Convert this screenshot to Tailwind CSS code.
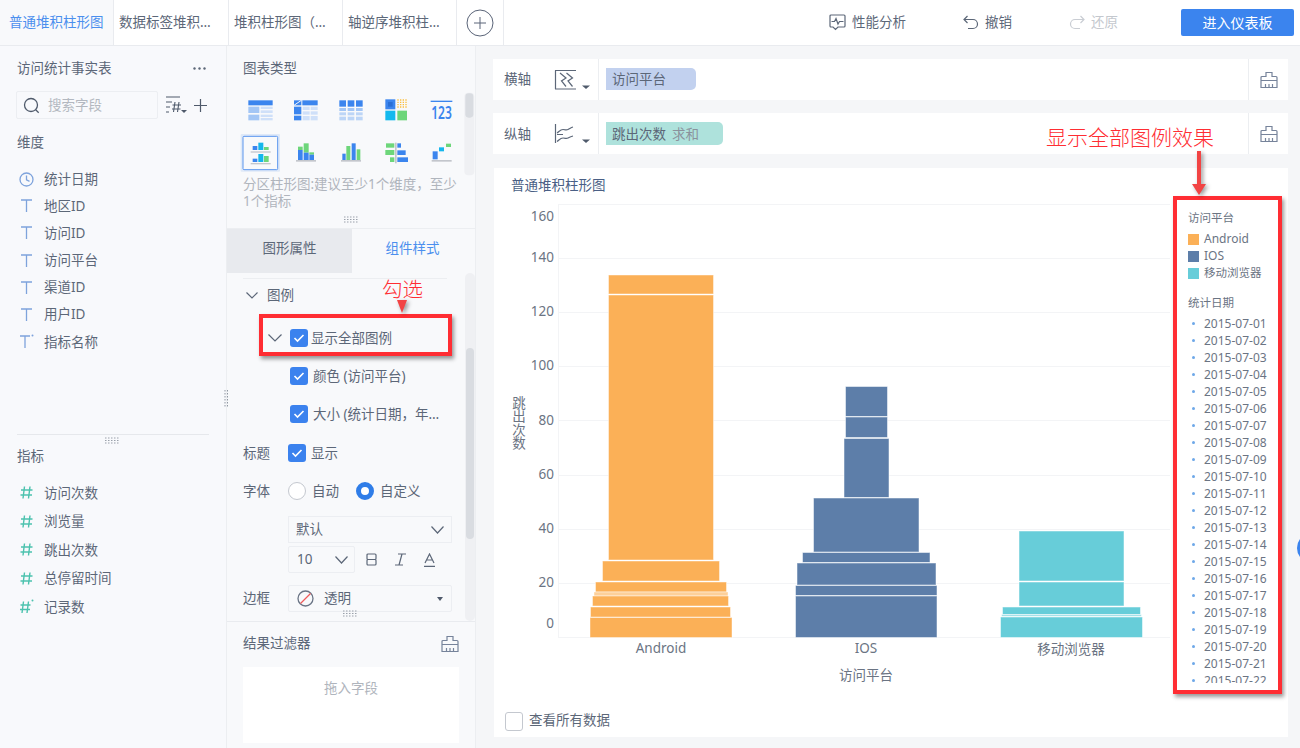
<!DOCTYPE html>
<html lang="zh-CN">
<head>
    <meta charset="UTF-8">
    <title>普通堆积柱形图</title>
    <script src="https://cdn.jsdelivr.net/npm/@tailwindcss/browser@4"></script>
</head>
<body class="bg-white font-['Noto_Sans','Noto_Sans_CJK_SC',sans-serif] text-[13.5px] text-[#5c6778]">
<div class="relative w-[1300px] h-[748px] overflow-hidden flex flex-col">

    <!-- top bar -->
    <div class="h-[46px] shrink-0 flex border-b border-[#e9ebef] bg-white">
        <div class="w-[114px] border-r border-[#e9ebef] bg-[#f8f9fb] pl-[9px] leading-[45px] text-[#4b8fee]">普通堆积柱形图</div>
        <div class="w-[115px] border-r border-[#e9ebef] pl-[5px] leading-[45px] whitespace-nowrap">数据标签堆积…</div>
        <div class="w-[114px] border-r border-[#e9ebef] pl-[5px] leading-[45px] whitespace-nowrap">堆积柱形图（…</div>
        <div class="w-[114px] border-r border-[#e9ebef] pl-[5px] leading-[45px] whitespace-nowrap">轴逆序堆积柱…</div>
        <div class="w-[47px] border-r border-[#e9ebef] flex items-center justify-center">
            <svg width="28" height="28" viewBox="0 0 28 28" fill="none" stroke="#5a6478"><circle cx="14" cy="14" r="13"/><path d="M14 8v12M8 14h12"/></svg>
        </div>
        <div class="ml-[325px] flex items-center gap-[6px]">
            <svg width="17" height="17" viewBox="0 0 17 17" fill="none" stroke="#5c6778" stroke-width="1.2"><path d="M4 13H2a1 1 0 0 1-1-1V2a1 1 0 0 1 1-1h13a1 1 0 0 1 1 1v10a1 1 0 0 1-1 1H9l-2.500 2.500L4 13z"/><path d="M2.500 7.500h3l1.500-3 2 5.500 1.500-2.500h4"/></svg>
            <span>性能分析</span>
        </div>
        <div class="ml-[57px] flex items-center gap-[6px]">
            <svg width="16" height="16" viewBox="0 0 16 16" fill="none" stroke="#5c6778" stroke-width="1.2"><path d="M4.500 1L1 4.500 4.500 8M1 4.500h9a4.500 4.500 0 0 1 0 9H5"/></svg>
            <span>撤销</span>
        </div>
        <div class="ml-[57px] flex items-center gap-[6px] text-[#c4c8ce]">
            <svg width="16" height="16" viewBox="0 0 16 16" fill="none" stroke="#c9cdd3" stroke-width="1.2"><path d="M11.500 1L15 4.500 11.500 8M15 4.500H6a4.500 4.500 0 0 0 0 9h5"/></svg>
            <span>还原</span>
        </div>
        <div class="ml-[63px] mt-[9px] w-[113px] h-[27px] rounded-[2px] bg-[#3b84ee] text-white text-[14px] leading-[27px] text-center">进入仪表板</div>
    </div>

    <div class="flex-1 flex min-h-0">

        <!-- field panel -->
        <div class="w-[226px] shrink-0 bg-[#f8f9fc] flex flex-col">
            <div class="h-[45px] shrink-0 flex items-center justify-between pl-[17px] pr-[20px]">
                <span>访问统计事实表</span>
                <svg width="13" height="3" viewBox="0 0 13 3" fill="#5c6778"><circle cx="1.500" cy="1.500" r="1.200"/><circle cx="6.500" cy="1.500" r="1.200"/><circle cx="11.500" cy="1.500" r="1.200"/></svg>
            </div>
            <div class="h-[28px] shrink-0 flex items-center pl-[16px]">
                <div class="w-[142px] h-[28px] border border-[#eceef2] rounded-[2px] flex items-center pl-[6px] gap-[8px] text-[#b3b8c0]">
                    <svg width="17" height="17" viewBox="0 0 17 17" fill="none" stroke="#4f5a6b" stroke-width="1.300"><circle cx="8" cy="8" r="6.500"/><path d="M12.700 12.700l3 3"/></svg>
                    <span>搜索字段</span>
                </div>
                <svg class="ml-[7px]" width="23" height="20" viewBox="0 0 23 20" fill="none" stroke="#4f5a6b" stroke-width="1.100"><path d="M1 2h14M1 7h6M1 12h4M1 17h3"/><path d="M10 7l-1.500 10M14 7l-1.500 10M7.500 10h8.500M7 14h8.500"/><path d="M16 15h6l-3 3z" fill="#4f5a6b" stroke="none"/></svg>
                <svg class="ml-[5px]" width="15" height="15" viewBox="0 0 15 15" fill="none" stroke="#4f5a6b" stroke-width="1.200"><path d="M7.500 1v13M1 7.500h13"/></svg>
            </div>
            <div class="h-[46px] shrink-0 pl-[17px] leading-[46px]">维度</div>
            <div class="h-[269px] shrink-0">
                <div class="h-[27.2px] flex items-center gap-[10px] pl-[19px] pt-[2px]">
                    <svg width="15" height="15" viewBox="0 0 15 15" fill="none" stroke="#7ea3dc" stroke-width="1.300"><circle cx="7.500" cy="7.500" r="6.500"/><path d="M7.500 3.500v4.300l3 1.500"/></svg>
                    <span>统计日期</span>
                </div>
                <div class="h-[27.2px] flex items-center gap-[10px] pl-[19px]">
                    <svg width="15" height="15" viewBox="0 0 15 15" fill="none" stroke="#7ea3dc" stroke-width="1.300"><path d="M2 2h11M7.500 2v12"/></svg>
                    <span>地区ID</span>
                </div>
                <div class="h-[27.2px] flex items-center gap-[10px] pl-[19px]">
                    <svg width="15" height="15" viewBox="0 0 15 15" fill="none" stroke="#7ea3dc" stroke-width="1.300"><path d="M2 2h11M7.500 2v12"/></svg>
                    <span>访问ID</span>
                </div>
                <div class="h-[27.2px] flex items-center gap-[10px] pl-[19px]">
                    <svg width="15" height="15" viewBox="0 0 15 15" fill="none" stroke="#7ea3dc" stroke-width="1.300"><path d="M2 2h11M7.500 2v12"/></svg>
                    <span>访问平台</span>
                </div>
                <div class="h-[27.2px] flex items-center gap-[10px] pl-[19px]">
                    <svg width="15" height="15" viewBox="0 0 15 15" fill="none" stroke="#7ea3dc" stroke-width="1.300"><path d="M2 2h11M7.500 2v12"/></svg>
                    <span>渠道ID</span>
                </div>
                <div class="h-[27.2px] flex items-center gap-[10px] pl-[19px]">
                    <svg width="15" height="15" viewBox="0 0 15 15" fill="none" stroke="#7ea3dc" stroke-width="1.300"><path d="M2 2h11M7.500 2v12"/></svg>
                    <span>用户ID</span>
                </div>
                <div class="h-[27.2px] flex items-center gap-[10px] pl-[19px]">
                    <svg width="15" height="15" viewBox="0 0 15 15" fill="none" stroke="#7ea3dc" stroke-width="1.300"><path d="M1 2h10M6 2v12"/><circle cx="13.500" cy="1.500" r="1" fill="#7ea3dc" stroke="none"/></svg>
                    <span>指标名称</span>
                </div>
            </div>
            <div class="relative mx-[17px] border-t border-[#e6e8ec] h-[44.7px] leading-[42px]">
                <span>指标</span>
                <svg class="absolute left-[88px] top-[2px]" width="15" height="7" viewBox="0 0 15 7" fill="none" stroke="#9aa0aa" stroke-dasharray="1.500 1.500"><path d="M0 1h15M0 3.500h15M0 6h15"/></svg>
            </div>
            <div class="h-[28.500px] flex items-center gap-[10px] pl-[19px]">
                <svg width="15" height="15" viewBox="0 0 15 15" fill="none" stroke="#4cc2ae" stroke-width="1.400"><path d="M5.500 1.500L4 13.500M11 1.500L9.500 13.500M2 5h11.500M1.500 10h11.500"/></svg>
                <span>访问次数</span>
            </div>
            <div class="h-[28.500px] flex items-center gap-[10px] pl-[19px]">
                <svg width="15" height="15" viewBox="0 0 15 15" fill="none" stroke="#4cc2ae" stroke-width="1.400"><path d="M5.500 1.500L4 13.500M11 1.500L9.500 13.500M2 5h11.500M1.500 10h11.500"/></svg>
                <span>浏览量</span>
            </div>
            <div class="h-[28.500px] flex items-center gap-[10px] pl-[19px]">
                <svg width="15" height="15" viewBox="0 0 15 15" fill="none" stroke="#4cc2ae" stroke-width="1.400"><path d="M5.500 1.500L4 13.500M11 1.500L9.500 13.500M2 5h11.500M1.500 10h11.500"/></svg>
                <span>跳出次数</span>
            </div>
            <div class="h-[28.500px] flex items-center gap-[10px] pl-[19px]">
                <svg width="15" height="15" viewBox="0 0 15 15" fill="none" stroke="#4cc2ae" stroke-width="1.400"><path d="M5.500 1.500L4 13.500M11 1.500L9.500 13.500M2 5h11.500M1.500 10h11.500"/></svg>
                <span>总停留时间</span>
            </div>
            <div class="h-[28.500px] flex items-center gap-[10px] pl-[19px]">
                <svg width="15" height="15" viewBox="0 0 15 15" fill="none" stroke="#4cc2ae" stroke-width="1.400"><path d="M4.500 2.500L3 14M9.500 2.500L8 14M1.500 6h10M1 10.500h10"/><circle cx="13.500" cy="1.500" r="1" fill="#4cc2ae" stroke="none"/></svg>
                <span>记录数</span>
            </div>
        </div>

        <!-- chart config panel -->
        <div class="relative w-[250px] shrink-0 bg-[#f8f9fb] border-x border-[#eceef1] flex flex-col">
            <svg class="absolute left-[-3px] top-[344px]" width="5" height="17" viewBox="0 0 5 17" fill="none" stroke="#8f96a1" stroke-dasharray="1.500 1.500"><path d="M1 0v17M3.500 0v17"/></svg>
            <div class="h-[40px] shrink-0 pt-[5px] pl-[16px] leading-[34px]">图表类型</div>
            <svg class="ml-[3px] shrink-0" width="250" height="90" viewBox="0 0 750 270">
                <!-- row 1 -->
                <rect x="55" y="43" width="73" height="15" fill="#3b85ee"/>
                <rect x="55" y="62" width="33" height="19" fill="#a3c6f5"/><rect x="55" y="86" width="33" height="17" fill="#a3c6f5"/>
                <rect x="92" y="62" width="36" height="7" fill="#cfe0f9"/><rect x="92" y="73" width="36" height="8" fill="#cfe0f9"/><rect x="92" y="86" width="36" height="7" fill="#cfe0f9"/><rect x="92" y="96" width="36" height="7" fill="#cfe0f9"/>

                <rect x="217" y="43" width="46" height="15" fill="#3b85ee"/>
                <path d="M192 43h22v15h-22z" fill="#3b85ee"/><path d="M192 58l22-15" stroke="#f8f9fb" stroke-width="3"/>
                <rect x="192" y="62" width="22" height="23" fill="#3b85ee"/><rect x="192" y="89" width="22" height="14" fill="#3b85ee"/>
                <rect x="218" y="62" width="21" height="10" fill="#cfe0f9"/><rect x="242" y="62" width="21" height="10" fill="#cfe0f9"/>
                <rect x="218" y="76" width="21" height="10" fill="#cfe0f9"/><rect x="242" y="76" width="21" height="10" fill="#cfe0f9"/>
                <rect x="218" y="90" width="21" height="13" fill="#cfe0f9"/><rect x="242" y="90" width="21" height="13" fill="#cfe0f9"/>

                <rect x="328" y="43" width="20" height="19" fill="#3b85ee"/><rect x="353" y="43" width="20" height="19" fill="#3b85ee"/><rect x="378" y="43" width="20" height="19" fill="#3b85ee"/>
                <rect x="328" y="66" width="20" height="9" fill="#a3c6f5"/><rect x="353" y="66" width="20" height="9" fill="#a3c6f5"/><rect x="378" y="66" width="20" height="9" fill="#a3c6f5"/>
                <rect x="328" y="79" width="20" height="9" fill="#bcd5f7"/><rect x="353" y="79" width="20" height="9" fill="#bcd5f7"/><rect x="378" y="79" width="20" height="9" fill="#bcd5f7"/>
                <rect x="328" y="92" width="20" height="11" fill="#bcd5f7"/><rect x="353" y="92" width="20" height="11" fill="#bcd5f7"/><rect x="378" y="92" width="20" height="11" fill="#bcd5f7"/>

                <rect x="466" y="40" width="30" height="30" fill="#3b85ee"/><rect x="474" y="48" width="14" height="14" fill="#2a6fd6"/>
                <path d="M502 42h29M502 49h29M502 56h29M502 63h29" stroke="#fbbf3c" stroke-width="4" stroke-dasharray="4 4"/>
                <rect x="466" y="74" width="30" height="29" fill="#13b9ee"/><rect x="502" y="74" width="29" height="29" fill="#6dd67a"/>

                <rect x="602" y="44" width="65" height="4" fill="#3b85ee"/>
                <text x="634.500" y="100" text-anchor="middle" font-size="56" font-weight="600" textLength="62" lengthAdjust="spacingAndGlyphs" fill="#3b85ee">123</text>

                <!-- row 2 -->
                <rect x="32" y="144" width="118" height="113" rx="3" fill="#dfe9f8"/>
                <rect x="39" y="151" width="104" height="100" rx="3" fill="#f8f9fb" stroke="#5b96ee" stroke-width="3"/>
                <rect x="68" y="180" width="14" height="12" fill="#3b85ee"/><rect x="85" y="170" width="15" height="22" fill="#15b6ec"/><rect x="102" y="183" width="14" height="9" fill="#6dd67a"/>
                <rect x="62" y="196" width="60" height="4" fill="#c3c6cc"/>
                <rect x="68" y="218" width="14" height="10" fill="#3b85ee"/><rect x="85" y="204" width="15" height="24" fill="#15b6ec"/><rect x="102" y="210" width="14" height="18" fill="#6dd67a"/>
                <rect x="62" y="231" width="60" height="4" fill="#c3c6cc"/>

                <rect x="198" y="222" width="60" height="5" fill="#c3c6cc"/>
                <rect x="204" y="182" width="14" height="10" fill="#6dd67a"/><rect x="204" y="192" width="14" height="30" fill="#3b85ee"/>
                <rect x="221" y="172" width="15" height="28" fill="#6dd67a"/><rect x="221" y="200" width="15" height="22" fill="#3b85ee"/>
                <rect x="238" y="199" width="14" height="7" fill="#6dd67a"/><rect x="238" y="206" width="14" height="16" fill="#3b85ee"/>

                <rect x="333" y="222" width="60" height="5" fill="#c3c6cc"/>
                <rect x="337" y="203" width="10" height="19" fill="#3b85ee"/><rect x="349" y="180" width="12" height="42" fill="#6dd67a"/>
                <rect x="365" y="172" width="12" height="50" fill="#3b85ee"/><rect x="380" y="190" width="11" height="32" fill="#6dd67a"/>

                <rect x="495" y="170" width="5" height="62" fill="#c3c6cc"/>
                <rect x="468" y="172" width="25" height="13" fill="#6dd67a"/><rect x="466" y="192" width="27" height="15" fill="#6dd67a"/><rect x="480" y="214" width="13" height="14" fill="#6dd67a"/>
                <rect x="502" y="172" width="11" height="13" fill="#3b85ee"/><rect x="502" y="193" width="25" height="14" fill="#3b85ee"/><rect x="502" y="214" width="32" height="14" fill="#3b85ee"/>

                <rect x="605" y="222" width="60" height="5" fill="#c3c6cc"/>
                <rect x="608" y="196" width="15" height="24" fill="#3b85ee"/><rect x="627" y="184" width="15" height="12" fill="#15b6ec"/><rect x="648" y="173" width="15" height="10" fill="#6dd67a"/>

                <!-- scroll -->
                <rect x="703" y="20" width="30" height="248" rx="12" fill="#eff0f3"/>
                <rect x="706" y="22" width="24" height="73" rx="10" fill="#d9dce1"/>
            </svg>
            <div class="h-[35px] shrink-0 pl-[16px] whitespace-nowrap text-[13.5px] leading-[17px] text-[#b0b5bd]">分区柱形图:建议至少1个维度，至少<br>1个指标</div>
            <div class="h-[17px] shrink-0 flex items-center justify-center">
                <svg width="15" height="7" viewBox="0 0 15 7" fill="none" stroke="#9aa0aa" stroke-dasharray="1.500 1.500"><path d="M0 1h15M0 3.500h15M0 6h15"/></svg>
            </div>
            <div class="h-[45px] shrink-0 flex border-t border-[#eceef1]">
                <div class="w-[125px] bg-[#e8eaee] text-center leading-[39px]">图形属性</div>
                <div class="flex-1 text-center leading-[39px] text-[#4b8fee] pr-[2px]">组件样式</div>
            </div>

            <div class="relative h-[348px] shrink-0 overflow-hidden pl-[16px]">
                <div class="absolute right-0 top-0 bottom-0 w-[10px] rounded-[5px] bg-[#eff0f3]">
                    <div class="mt-[75px] mx-[1px] h-[191px] rounded-[4px] bg-[#d9dce1]"></div>
                </div>
                <div class="w-[204px] border-t border-[#eceef1] mt-[5px] h-[33px] flex items-center gap-[9px] pl-[3px]">
                    <svg width="12" height="7" viewBox="0 0 12 7" fill="none" stroke="#5c6778" stroke-width="1.200"><path d="M.5.500L6 6 11.500.500"/></svg>
                    <span>图例</span>
                </div>
                <div class="mt-[8px] h-[38px] flex items-center pl-[25px]">
                    <svg width="14" height="8" viewBox="0 0 14 8" fill="none" stroke="#5c6778" stroke-width="1.200"><path d="M.5.500L7 7 13.500.500"/></svg>
                    <svg class="ml-[8px]" width="18" height="18" viewBox="0 0 18 18"><rect width="18" height="18" rx="3" fill="#3b82ee"/><path d="M4.500 9l3 3 6-6" fill="none" stroke="#fff" stroke-width="1.600"/></svg>
                    <span class="ml-[3px]">显示全部图例</span>
                </div>
                <div class="h-[38px] flex items-center pl-[47px]">
                    <svg width="18" height="18" viewBox="0 0 18 18"><rect width="18" height="18" rx="3" fill="#3b82ee"/><path d="M4.500 9l3 3 6-6" fill="none" stroke="#fff" stroke-width="1.600"/></svg>
                    <span class="ml-[5px]">颜色 (访问平台)</span>
                </div>
                <div class="h-[38px] flex items-center pl-[47px] whitespace-nowrap">
                    <svg width="18" height="18" viewBox="0 0 18 18"><rect width="18" height="18" rx="3" fill="#3b82ee"/><path d="M4.500 9l3 3 6-6" fill="none" stroke="#fff" stroke-width="1.600"/></svg>
                    <span class="ml-[5px]">大小 (统计日期，年…</span>
                </div>
                <div class="mt-[1px] h-[38px] flex items-center">
                    <span class="w-[45px]">标题</span>
                    <svg width="18" height="18" viewBox="0 0 18 18"><rect width="18" height="18" rx="3" fill="#3b82ee"/><path d="M4.500 9l3 3 6-6" fill="none" stroke="#fff" stroke-width="1.600"/></svg>
                    <span class="ml-[5px]">显示</span>
                </div>
                <div class="h-[38px] flex items-center">
                    <span class="w-[45px]">字体</span>
                    <span class="w-[18px] h-[18px] rounded-full border border-[#c4c8cf] bg-white"></span>
                    <span class="ml-[6px] w-[44px]">自动</span>
                    <span class="w-[18px] h-[18px] rounded-full border-[5px] border-[#2f7de8] bg-white"></span>
                    <span class="ml-[6px]">自定义</span>
                </div>
                <div class="mt-[6px] ml-[45px] w-[164px] h-[27px] border border-[#eceef2] flex items-center justify-between pl-[7px] pr-[7px]">
                    <span>默认</span>
                    <svg width="13" height="8" viewBox="0 0 13 8" fill="none" stroke="#5c6778" stroke-width="1.200"><path d="M.5.500L6.500 7 12.500.500"/></svg>
                </div>
                <div class="mt-[3px] ml-[45px] h-[27px] flex items-center">
                    <div class="w-[67px] h-[27px] border border-[#eceef2] rounded-[2px] flex items-center justify-between pl-[8px] pr-[6px]">
                        <span>10</span>
                        <svg width="13" height="8" viewBox="0 0 13 8" fill="none" stroke="#5c6778" stroke-width="1.200"><path d="M.5.500L6.500 7 12.500.500"/></svg>
                    </div>
                    <svg class="ml-[11px]" width="11" height="13" viewBox="0 0 11 13" fill="none" stroke="#5c6778" stroke-width="1.200"><rect x="1" y="1" width="9" height="5.500" rx="1"/><rect x="1" y="6.500" width="9" height="5.500" rx="1"/></svg>
                    <svg class="ml-[17px]" width="13" height="13" viewBox="0 0 13 13" fill="none" stroke="#5c6778" stroke-width="1.200"><path d="M4 1h8M1 12h8M8 1L5 12"/></svg>
                    <svg class="ml-[16px]" width="13" height="14" viewBox="0 0 13 14" fill="none" stroke="#5c6778" stroke-width="1.200"><path d="M2 10L6.500 1 11 10M3.500 7h6M1 13.300h11"/></svg>
                </div>
                <div class="mt-[12px] h-[27px] flex items-center">
                    <span class="w-[45px]">边框</span>
                    <div class="w-[164px] h-[27px] border border-[#eceef2] rounded-[2px] flex items-center pl-[8px] pr-[8px]">
                        <svg width="17" height="17" viewBox="0 0 17 17" fill="none"><circle cx="8.500" cy="8.500" r="7.500" stroke="#6a7485" stroke-width="1.300"/><path d="M3.500 13.500l10-10" stroke="#f05a5a" stroke-width="1.300"/></svg>
                        <span class="ml-[10px]">透明</span>
                        <svg class="ml-auto" width="6" height="4" viewBox="0 0 6 4" fill="#4f5a6b"><path d="M0 0h6L3 4z"/></svg>
                    </div>
                </div>
                <svg class="absolute left-[116px] top-[337px]" width="15" height="7" viewBox="0 0 15 7" fill="none" stroke="#9aa0aa" stroke-dasharray="1.500 1.500"><path d="M0 1h15M0 3.500h15M0 6h15"/></svg>
            </div>

            <div class="flex-1 border-t border-[#e9ebef] px-[16px]">
                <div class="h-[45px] pb-[2px] flex items-center justify-between">
                    <span>结果过滤器</span>
                    <svg width="18" height="18" viewBox="0 0 18 18" fill="none" stroke="#76839a" stroke-width="1.200"><path d="M6 1.500h6v4h4a1 1 0 0 1 1 1v10H1v-10a1 1 0 0 1 1-1h4zM1 9.500h16M5.500 17v-4M9 17v-4M12.500 17v-4"/></svg>
                </div>
                <div class="w-[216px] h-[76px] bg-white text-center text-[#b0b5bd] pt-[11px] leading-[20px]">拖入字段</div>
            </div>
        </div>

        <!-- work area -->
        <div class="flex-1 bg-[#f5f6f8] pl-[17px] pr-[12px] pt-[13px]">
            <div class="h-[41px] bg-white flex items-center">
                <span class="w-[61px] pl-[11px]">横轴</span>
                <svg width="36" height="24" viewBox="0 0 36 24" fill="none" stroke="#5c6778" stroke-width="1.200"><path d="M1 2.500h21M1 21h21M1.500 2.500V21M6 5l6 5-4.500 3 4.500 5.500M12.500 5l6 5-4.500 3 4.500 5.500"/><path d="M28 17.500h8l-4 3.500z" fill="#4f5a6b" stroke="none"/></svg>
                <div class="ml-[8px] h-[41px] border-l border-[#eceef1] flex items-center pl-[7px] pb-[1px] flex-1">
                    <span class="w-[90px] h-[22px] leading-[22px] pl-[6px] bg-[#c2d1ef] rounded-r-[5px]">访问平台</span>
                </div>
                <div class="w-[40px] h-[41px] border-l border-[#eceef1] flex items-center justify-center">
                    <svg width="18" height="18" viewBox="0 0 18 18" fill="none" stroke="#76839a" stroke-width="1.200"><path d="M6 1.500h6v4h4a1 1 0 0 1 1 1v10H1v-10a1 1 0 0 1 1-1h4zM1 9.500h16M5.500 17v-4M9 17v-4M12.500 17v-4"/></svg>
                </div>
            </div>
            <div class="mt-[13px] h-[41px] bg-white flex items-center">
                <span class="w-[61px] pl-[11px] pt-[1px]">纵轴</span>
                <svg width="36" height="24" viewBox="0 0 36 24" fill="none" stroke="#5c6778" stroke-width="1.200"><path d="M1.500 2v19M3 11c2-1 3-3.500 6-3.500s3 1 5 0 3-2 5-2.500M3 12.500h6M3 19.500c2-1 3-3.500 6-3.500s3 1 5 0 3-1.500 5-2"/><path d="M28 17.500h8l-4 3.500z" fill="#4f5a6b" stroke="none"/></svg>
                <div class="ml-[8px] h-[41px] border-l border-[#eceef1] flex items-center pl-[7px] flex-1">
                    <span class="w-[117px] h-[23px] leading-[24px] pl-[6px] bg-[#aee2dc] rounded-r-[5px] whitespace-nowrap">跳出次数<span class="ml-[6px] text-[#8b929c]">求和</span></span>
                </div>
                <div class="w-[40px] h-[41px] border-l border-[#eceef1] flex items-center justify-center">
                    <svg width="18" height="18" viewBox="0 0 18 18" fill="none" stroke="#76839a" stroke-width="1.200"><path d="M6 1.500h6v4h4a1 1 0 0 1 1 1v10H1v-10a1 1 0 0 1 1-1h4zM1 9.500h16M5.500 17v-4M9 17v-4M12.500 17v-4"/></svg>
                </div>
            </div>
            <div class="mt-[14px] ml-[1px] h-[569px] bg-white">
                <div class="h-[34px] pl-[17px] leading-[34px] text-[#4a5f85]">普通堆积柱形图</div>
                <div class="flex h-[510px]">
                    <svg class="shrink-0" width="683" height="510" viewBox="494 202 683 510" fill="#6b7483" font-size="13.500">
                        <g stroke="#f3f4f6">
                            <path d="M558 204.500H1170M558 258.500H1170M558 312.500H1170M558 366.500H1170M558 420.500H1170M558 475.500H1170M558 529.500H1170M558 583.500H1170M558 637.500H1170M558.500 204V638"/>
                        </g>
                        <g text-anchor="end">
                            <text x="554" y="221">160</text><text x="554" y="262">140</text><text x="554" y="316">120</text><text x="554" y="370">100</text>
                            <text x="554" y="425">80</text><text x="554" y="479">60</text><text x="554" y="533">40</text><text x="554" y="587">20</text><text x="554" y="628">0</text>
                        </g>
                        <text x="518" y="396" writing-mode="vertical-rl">跳出次数</text>
                        <g text-anchor="middle">
                            <text x="661" y="653">Android</text><text x="866" y="653">IOS</text><text x="1071" y="654">移动浏览器</text>
                            <text x="866" y="680">访问平台</text>
                        </g>
                        <g fill="#fbb057" stroke="#fff" stroke-opacity=".45">
                            <rect x="608.500" y="275" width="105" height="19"/>
                            <rect x="608.500" y="295" width="105" height="265"/>
                            <rect x="602.500" y="561" width="117" height="20"/>
                            <rect x="595.500" y="582" width="131" height="10"/>
                            <rect x="594" y="592" width="134" height="4" fill-opacity=".6"/>
                            <rect x="592.500" y="596" width="136" height="10"/>
                            <rect x="590.500" y="607" width="140" height="10"/>
                            <rect x="590" y="617.500" width="142" height="20"/>
                        </g>
                        <g fill="#5d7ea9" stroke="#fff" stroke-opacity=".5">
                            <rect x="845.500" y="386.500" width="42" height="30"/>
                            <rect x="845.500" y="417" width="42" height="20.500"/>
                            <rect x="844" y="438.500" width="45" height="59"/>
                            <rect x="813.500" y="498" width="105.500" height="54"/>
                            <rect x="802.500" y="552.500" width="127.500" height="10"/>
                            <rect x="797" y="563" width="139" height="22"/>
                            <rect x="795.500" y="585.500" width="141.500" height="10"/>
                            <rect x="795.500" y="596" width="141.500" height="41.500"/>
                        </g>
                        <g fill="#67cdd9" stroke="#fff" stroke-opacity=".5">
                            <rect x="1019" y="531" width="105" height="50"/>
                            <rect x="1019" y="582" width="105" height="24"/>
                            <rect x="1002.500" y="607" width="138" height="7.500"/>
                            <rect x="1001.500" y="614.500" width="140" height="2" fill-opacity=".6"/>
                            <rect x="1000.500" y="617" width="142" height="20.500"/>
                        </g>
                    </svg>
                    <!-- legend -->
                    <div class="w-[101px] h-[481px] overflow-hidden pl-[11px] text-[12px] text-[#6b7483] whitespace-nowrap">
                        <div class="mt-[7px] h-[18px] leading-[18px] text-[11.500px]">访问平台</div>
                        <div class="mt-[3.500px] h-[17px] flex items-center gap-[5px]"><span class="w-[11px] h-[11px] bg-[#fbb057]"></span>Android</div>
                        <div class="h-[17px] flex items-center gap-[5px]"><span class="w-[11px] h-[11px] bg-[#5d7ea9]"></span>IOS</div>
                        <div class="h-[17px] flex items-center gap-[5px] text-[11.500px]"><span class="w-[11px] h-[11px] bg-[#67cdd9]"></span>移动浏览器</div>
                        <div class="mt-[12px] mb-[3.500px] h-[18px] leading-[18px] text-[11.500px]">统计日期</div>
                        <div class="h-[17px] flex items-center pl-[4px]"><span class="w-[3px] h-[3px] rounded-full bg-[#6ea8e8] mr-[9px]"></span>2015-07-01</div>
                        <div class="h-[17px] flex items-center pl-[4px]"><span class="w-[3px] h-[3px] rounded-full bg-[#6ea8e8] mr-[9px]"></span>2015-07-02</div>
                        <div class="h-[17px] flex items-center pl-[4px]"><span class="w-[3px] h-[3px] rounded-full bg-[#6ea8e8] mr-[9px]"></span>2015-07-03</div>
                        <div class="h-[17px] flex items-center pl-[4px]"><span class="w-[3px] h-[3px] rounded-full bg-[#6ea8e8] mr-[9px]"></span>2015-07-04</div>
                        <div class="h-[17px] flex items-center pl-[4px]"><span class="w-[3px] h-[3px] rounded-full bg-[#6ea8e8] mr-[9px]"></span>2015-07-05</div>
                        <div class="h-[17px] flex items-center pl-[4px]"><span class="w-[3px] h-[3px] rounded-full bg-[#6ea8e8] mr-[9px]"></span>2015-07-06</div>
                        <div class="h-[17px] flex items-center pl-[4px]"><span class="w-[3px] h-[3px] rounded-full bg-[#6ea8e8] mr-[9px]"></span>2015-07-07</div>
                        <div class="h-[17px] flex items-center pl-[4px]"><span class="w-[3px] h-[3px] rounded-full bg-[#6ea8e8] mr-[9px]"></span>2015-07-08</div>
                        <div class="h-[17px] flex items-center pl-[4px]"><span class="w-[3px] h-[3px] rounded-full bg-[#6ea8e8] mr-[9px]"></span>2015-07-09</div>
                        <div class="h-[17px] flex items-center pl-[4px]"><span class="w-[3px] h-[3px] rounded-full bg-[#6ea8e8] mr-[9px]"></span>2015-07-10</div>
                        <div class="h-[17px] flex items-center pl-[4px]"><span class="w-[3px] h-[3px] rounded-full bg-[#6ea8e8] mr-[9px]"></span>2015-07-11</div>
                        <div class="h-[17px] flex items-center pl-[4px]"><span class="w-[3px] h-[3px] rounded-full bg-[#6ea8e8] mr-[9px]"></span>2015-07-12</div>
                        <div class="h-[17px] flex items-center pl-[4px]"><span class="w-[3px] h-[3px] rounded-full bg-[#6ea8e8] mr-[9px]"></span>2015-07-13</div>
                        <div class="h-[17px] flex items-center pl-[4px]"><span class="w-[3px] h-[3px] rounded-full bg-[#6ea8e8] mr-[9px]"></span>2015-07-14</div>
                        <div class="h-[17px] flex items-center pl-[4px]"><span class="w-[3px] h-[3px] rounded-full bg-[#6ea8e8] mr-[9px]"></span>2015-07-15</div>
                        <div class="h-[17px] flex items-center pl-[4px]"><span class="w-[3px] h-[3px] rounded-full bg-[#6ea8e8] mr-[9px]"></span>2015-07-16</div>
                        <div class="h-[17px] flex items-center pl-[4px]"><span class="w-[3px] h-[3px] rounded-full bg-[#6ea8e8] mr-[9px]"></span>2015-07-17</div>
                        <div class="h-[17px] flex items-center pl-[4px]"><span class="w-[3px] h-[3px] rounded-full bg-[#6ea8e8] mr-[9px]"></span>2015-07-18</div>
                        <div class="h-[17px] flex items-center pl-[4px]"><span class="w-[3px] h-[3px] rounded-full bg-[#6ea8e8] mr-[9px]"></span>2015-07-19</div>
                        <div class="h-[17px] flex items-center pl-[4px]"><span class="w-[3px] h-[3px] rounded-full bg-[#6ea8e8] mr-[9px]"></span>2015-07-20</div>
                        <div class="h-[17px] flex items-center pl-[4px]"><span class="w-[3px] h-[3px] rounded-full bg-[#6ea8e8] mr-[9px]"></span>2015-07-21</div>
                        <div class="h-[17px] flex items-center pl-[4px]"><span class="w-[3px] h-[3px] rounded-full bg-[#6ea8e8] mr-[9px]"></span>2015-07-22</div>
                    </div>
                </div>
                <div class="h-[18px] flex items-center pl-[11px] gap-[6px]">
                    <span class="w-[18px] h-[19px] border border-[#c4c8cf] rounded-[3px] bg-white"></span>
                    <span class="mt-[-2px]">查看所有数据</span>
                </div>
            </div>
        </div>
    </div>

    <!-- page-edge float button, cut off by the window -->
    <div class="absolute left-[1297px] top-[533px] w-[30px] h-[30px] rounded-full bg-[#3b84ee]"></div>

    <!-- red annotations over the screenshot -->
    <div class="absolute left-[259px] top-[314px] w-[193px] h-[42px] border-4 border-[#ff2d33] shadow-[2px_3px_4px_rgba(0,0,0,0.4)]"></div>
    <div class="absolute left-[382px] top-[275px] text-[20.500px] font-light leading-[28px] text-[#ff2d33]">勾选</div>
    <svg class="absolute left-[396px] top-[300px] drop-shadow-[2px_2px_2px_rgba(0,0,0,0.4)]" width="12" height="14" viewBox="0 0 12 14"><path d="M1 0h10L6 13z" fill="#f24444"/></svg>
    <div class="absolute left-[1173px] top-[196px] w-[109px] h-[498px] border-4 border-[#ff2d33] shadow-[2px_3px_4px_rgba(0,0,0,0.4)]"></div>
    <div class="absolute left-[1046px] top-[122px] text-[21px] font-light leading-[30px] text-[#ff2d33] whitespace-nowrap">显示全部图例效果</div>
    <svg class="absolute left-[1192px] top-[151px] drop-shadow-[2px_2px_2px_rgba(0,0,0,0.4)]" width="14" height="45" viewBox="0 0 14 45"><path d="M5 0h4v33h5L7 44 0 33h5z" fill="#f24444"/></svg>
</div>
</body>
</html>
